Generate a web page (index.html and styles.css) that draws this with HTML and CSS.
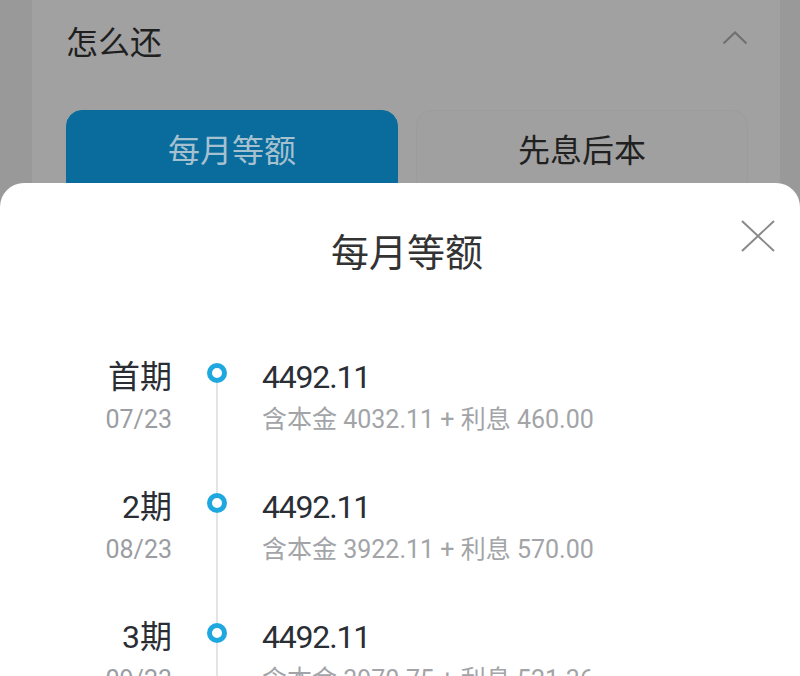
FILE: index.html
```html
<!DOCTYPE html>
<html lang="zh">
<head>
<meta charset="utf-8">
<link rel="stylesheet" href="styles.css">
</head>
<body>
<div class="page">
  <section class="card">
    <div class="card-head">
      <h2 class="card-title">怎么还</h2>
      <svg class="chevron" width="26" height="14" viewBox="0 0 26 14"><path d="M1.5 12.5 L13 1.5 L24.5 12.5" fill="none" stroke="#6f6f6f" stroke-width="2"/></svg>
    </div>
    <div class="options">
      <div class="opt opt-active">每月等额</div>
      <div class="opt">先息后本</div>
    </div>
  </section>
</div>

<div class="sheet">
  <div class="sheet-head">
    <span></span>
    <h1 class="sheet-title">每月等额</h1>
    <svg class="close" width="34" height="32" viewBox="0 0 34 32"><path d="M1 1 L33 31 M33 1 L1 31" fill="none" stroke="#8a8a8a" stroke-width="2"/></svg>
  </div>
  <div class="timeline">
    <div class="row first">
      <div class="when"><div class="term">首期</div><div class="date">07/23</div></div>
      <div class="axis"><span class="seg top"></span><span class="dot"></span><span class="seg grow"></span></div>
      <div class="what"><div class="amount">4492.11</div><div class="detail">含本金 4032.11 + 利息 460.00</div></div>
    </div>
    <div class="row">
      <div class="when"><div class="term">2期</div><div class="date">08/23</div></div>
      <div class="axis"><span class="seg top"></span><span class="dot"></span><span class="seg grow"></span></div>
      <div class="what"><div class="amount">4492.11</div><div class="detail">含本金 3922.11 + 利息 570.00</div></div>
    </div>
    <div class="row">
      <div class="when"><div class="term">3期</div><div class="date">09/23</div></div>
      <div class="axis"><span class="seg top"></span><span class="dot"></span><span class="seg grow"></span></div>
      <div class="what"><div class="amount">4492.11</div><div class="detail">含本金 3970.75 + 利息 521.36</div></div>
    </div>
  </div>
</div>
</body>
</html>
```

FILE: styles.css
```css
* { box-sizing: border-box; margin: 0; padding: 0; }
html, body { width: 800px; height: 676px; overflow: hidden; }
body {
  background: #999999;
  font-family: Roboto, "Noto Sans CJK SC", sans-serif;
  position: relative;
}
.page { padding: 0 20px 0 32px; }
.card {
  background: #a1a1a1;
  height: 260px;
  padding: 21px 32px 0 34px;
}
.card-head {
  display: flex;
  justify-content: space-between;
  align-items: center;
  height: 44px;
}
.card-title {
  font-size: 32px;
  font-weight: 400;
  line-height: 44px;
  color: #1f1f1f;
}
.chevron { margin-top: -10px; }
.options {
  display: flex;
  gap: 18px;
  margin-top: 45px;
}
.opt {
  flex: 1;
  height: 90px;
  border-radius: 16px;
  background: #a0a0a0;
  border: 1px solid #9c9c9c;
  font-size: 32px;
  line-height: 80px;
  text-align: center;
  color: #202020;
}
.opt-active {
  background: #0a6c9d;
  border-color: #0a6c9d;
  color: #a5c1d0;
}
.sheet {
  position: absolute;
  left: 0; right: 0; top: 183px; bottom: 0;
  background: #ffffff;
  border-radius: 24px 24px 0 0;
}
.sheet-head {
  display: grid;
  grid-template-columns: 1fr auto 1fr;
  align-items: center;
  padding-top: 48px;
}
.sheet-title {
  font-size: 38px;
  font-weight: 400;
  line-height: 44px;
  color: #333333;
  padding-left: 14px;
}
.close { justify-self: end; margin: -34px 25px 0 0; }
.timeline { padding-top: 82px; }
.row {
  display: grid;
  grid-template-columns: 172px 90px 1fr;
  height: 130px;
}
.when { text-align: right; }
.term {
  font-size: 32px;
  line-height: 40px;
  color: #2a2d33;
}
.date {
  font-size: 25px;
  line-height: 40px;
  margin-top: 3px;
  color: #9a9da2;
}
.axis {
  display: flex;
  flex-direction: column;
  align-items: center;
}
.seg { width: 2px; background: #e4e4e4; }
.seg.top { height: 6px; }
.first .seg.top { background: transparent; }
.seg.grow { flex: 1; }
.dot {
  width: 20px; height: 20px;
  border-radius: 50%;
  border: 5px solid #1fa8df;
  background: #fff;
}
.amount {
  font-size: 32px;
  line-height: 40px;
  letter-spacing: -1.2px;
  color: #2a2e35;
}
.detail {
  font-size: 25px;
  line-height: 40px;
  margin-top: 3px;
  color: #a2a4a8;
}
```
